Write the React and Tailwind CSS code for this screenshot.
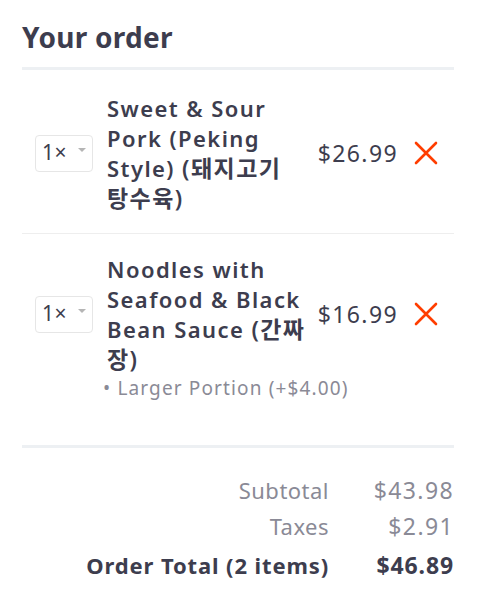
import { useState } from 'react';

const items = [
  { id: 1, qty: 1, name: 'Sweet & Sour Pork (Peking Style)', nameKo: '돼지고기 탕수육', price: 26.99, options: [] },
  {
    id: 2,
    qty: 1,
    name: 'Noodles with Seafood & Black Bean Sauce',
    nameKo: '간짜장',
    price: 16.99,
    options: ['Larger Portion (+$4.00)'],
  },
];

function QtySelect({ value }) {
  return (
    <div className="relative flex h-[37px] w-[58px] shrink-0 items-center rounded-[4px] border border-[#e6e6e6] bg-white pl-[6px] text-[21px] text-[#3d3d4e]">
      <span>{value}×</span>
      <span className="absolute right-[6px] top-[12px] h-0 w-0 border-x-[4px] border-t-[4px] border-x-transparent border-t-[#b5b5b5]" />
    </div>
  );
}

function RemoveIcon() {
  return (
    <svg width="24" height="24" viewBox="0 0 24 24" className="shrink-0">
      <path d="M2 2 L22 22 M22 2 L2 22" stroke="#ff3d00" strokeWidth="2.6" strokeLinecap="round" />
    </svg>
  );
}

export default function App() {
  const [order] = useState(items);
  const subtotal = order.reduce((s, i) => s + i.price * i.qty, 0);
  const taxes = 2.91;

  return (
    <div
      className="min-h-[608px] bg-white pl-[22px] pr-[27px] pt-[18px] tracking-[0.03em] text-[#3d3d4e]"
      style={{ fontFamily: '"Noto Sans", "Noto Sans CJK KR", sans-serif' }}
    >
      <h2 className="text-[28px] font-bold leading-[38px] tracking-[0.01em]">Your order</h2>
      <div className="mt-[11px] h-[3px] bg-[#edf0f3]" />

      <div>
        {order.map((item, idx) => (
          <div
            key={item.id}
            className={idx === 0 ? 'border-b border-[#eeeeee] pb-[20px] pl-[13px] pr-[16px] pt-[23px]' : 'pb-[43px] pl-[13px] pr-[16px] pt-[20px]'}
          >
            <div className="flex items-center">
              <QtySelect value={item.qty} />
              <div className="ml-[14px] w-[203px] text-[22px] font-semibold leading-[30px] tracking-[0.065em]">
                {item.name} <span className="text-[23px]">({item.nameKo})</span>
              </div>
              <div className="ml-auto text-[23px] leading-[30px] tracking-[0.06em]">${item.price.toFixed(2)}</div>
              <div className="ml-[16px]">
                <RemoveIcon />
              </div>
            </div>
            {item.options.map((opt) => (
              <div key={opt} className="ml-[68px] text-[19px] leading-[28px] tracking-[0.06em] text-[#8a8a96]">
                • {opt}
              </div>
            ))}
          </div>
        ))}
      </div>

      <div className="h-[3px] bg-[#edf0f3]" />

      <div className="pt-[24px] text-[22px]">
        <div className="flex justify-end leading-[36px] text-[#8a8a96]">
          <span>Subtotal</span>
          <span className="w-[125px] text-right text-[23px] tracking-[0.06em]">${subtotal.toFixed(2)}</span>
        </div>
        <div className="flex justify-end leading-[36px] text-[#8a8a96]">
          <span>Taxes</span>
          <span className="w-[125px] text-right text-[23px] tracking-[0.06em]">${taxes.toFixed(2)}</span>
        </div>
        <div className="flex justify-end font-bold leading-[42px] tracking-[0.04em]">
          <span>Order Total ({order.length} items)</span>
          <span className="w-[125px] text-right text-[23px]">${(subtotal + taxes).toFixed(2)}</span>
        </div>
      </div>
    </div>
  );
}
